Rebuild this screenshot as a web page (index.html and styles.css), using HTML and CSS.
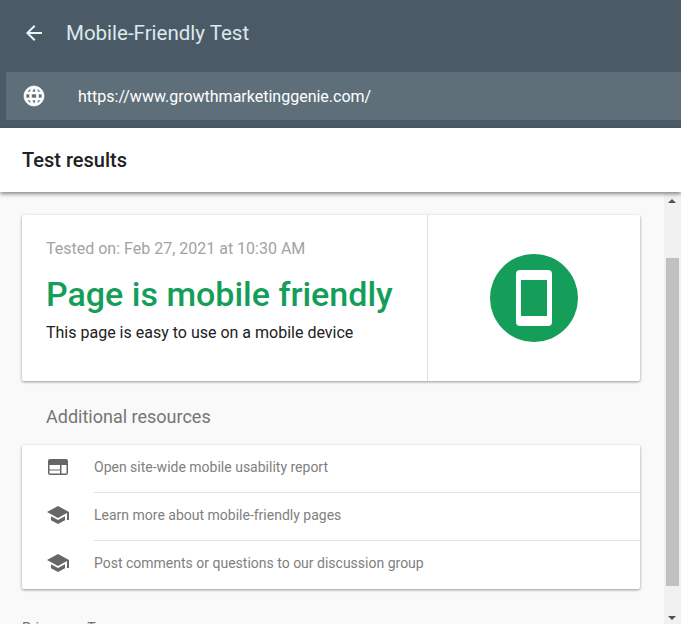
FILE: index.html
```html
<!DOCTYPE html>
<html lang="en">
<head>
<meta charset="utf-8">
<title>Mobile-Friendly Test</title>
<link rel="stylesheet" href="styles.css">
</head>
<body>
<header class="appbar">
  <div class="toolbar">
    <svg class="back" viewBox="0 0 24 24" width="24" height="24"><path d="M20 11H7.830l5.590-5.590L12 4l-8 8 8 8 1.410-1.410L7.830 13H20v-2z"/></svg>
    <h1 class="app-title">Mobile-Friendly Test</h1>
  </div>
  <div class="urlbar">
    <svg class="globe" viewBox="0 0 24 24" width="24" height="24"><path d="M12 2C6.480 2 2 6.480 2 12s4.480 10 10 10 10-4.480 10-10S17.520 2 12 2zm6.930 6h-2.950a15.650 15.650 0 0 0-1.380-3.560A8.030 8.030 0 0 1 18.920 8zM12 4.040c.830 1.200 1.480 2.530 1.910 3.960h-3.820c.430-1.430 1.080-2.760 1.910-3.960zM4.260 14C4.100 13.360 4 12.690 4 12s.100-1.360.260-2h3.380c-.080.660-.140 1.320-.140 2s.060 1.340.140 2H4.260zm.820 2h2.950c.320 1.250.780 2.450 1.380 3.560A7.987 7.987 0 0 1 5.080 16zm2.950-8H5.080a7.987 7.987 0 0 1 4.330-3.560A15.650 15.650 0 0 0 8.030 8zM12 19.960c-.830-1.200-1.480-2.530-1.910-3.960h3.820c-.430 1.430-1.080 2.760-1.910 3.960zM14.340 14H9.660c-.090-.660-.160-1.320-.160-2s.070-1.350.160-2h4.680c.090.650.160 1.320.160 2s-.070 1.340-.160 2zm.250 5.560c.600-1.110 1.060-2.310 1.380-3.560h2.950a8.030 8.030 0 0 1-4.330 3.560zM16.360 14c.080-.660.140-1.320.140-2s-.060-1.340-.140-2h3.380c.160.640.260 1.310.260 2s-.100 1.360-.260 2h-3.380z"/></svg>
    <span class="url">https://www.growthmarketinggenie.com/</span>
  </div>
</header>
<div class="subbar"><h2 class="sub-title">Test results</h2></div>
<div class="body-row">
  <main class="content">
    <section class="card result">
      <div class="result-text">
        <p class="tested">Tested on: Feb 27, 2021 at 10:30 AM</p>
        <p class="verdict">Page is mobile friendly</p>
        <p class="desc">This page is easy to use on a mobile device</p>
      </div>
      <div class="result-icon">
        <div class="badge"><div class="phone"><div class="screen"></div></div></div>
      </div>
    </section>
    <h3 class="res-heading">Additional resources</h3>
    <section class="card resources">
      <div class="res-row">
        <svg class="res-icon" viewBox="0 0 24 24" width="24" height="24"><path fill-rule="evenodd" d="M20 4H4C2.900 4 2 4.900 2 6v12c0 1.100.900 2 2 2h16c1.100 0 2-.900 2-2V6c0-1.100-.900-2-2-2zM3.500 10H14v4.500H3.500V10zm0 5.500H14v3H3.500v-3zm12-5.500h5v8.500h-5V10z"/></svg>
        <span class="res-label">Open site-wide mobile usability report</span>
      </div>
      <div class="res-row">
        <svg class="res-icon" viewBox="0 0 24 24" width="24" height="24"><path d="M5 13.180v4L12 21l7-3.820v-4L12 17l-7-3.820zM12 3L1 9l11 6 9-4.910V17h2V9L12 3z"/></svg>
        <span class="res-label">Learn more about mobile-friendly pages</span>
      </div>
      <div class="res-row">
        <svg class="res-icon" viewBox="0 0 24 24" width="24" height="24"><path d="M5 13.180v4L12 21l7-3.820v-4L12 17l-7-3.820zM12 3L1 9l11 6 9-4.910V17h2V9L12 3z"/></svg>
        <span class="res-label">Post comments or questions to our discussion group</span>
      </div>
    </section>
    <p class="footer-links"><span>Privacy</span><span>Terms</span></p>
  </main>
  <div class="scrollbar">
    <div class="arrow arrow-up"></div>
    <div class="thumb"></div>
    <div class="arrow arrow-down"></div>
  </div>
</div>
</body>
</html>
```
FILE: styles.css
```css
* { box-sizing: border-box; }
html, body { height: 100%; }
body {
  margin: 0;
  height: 624px;
  overflow: hidden;
  display: flex;
  flex-direction: column;
  font-family: Roboto, "Liberation Sans", sans-serif;
  background: #f9f9f9;
}
h1, h2, h3, p { margin: 0; font-weight: 400; }

.appbar {
  height: 128px;
  flex: none;
  background: #4a5b67;
  padding-left: 6px;
}
.toolbar {
  height: 72px;
  margin-left: -6px;
  padding: 0 0 7px 22px;
  display: flex;
  align-items: center;
}
.back { fill: #eef3f5; flex: none; }
.app-title {
  margin-left: 20px;
  font-size: 20.5px;
  line-height: 28px;
  color: #dfe8ec;
}
.urlbar {
  height: 48px;
  background: #5f6f7a;
  display: flex;
  align-items: center;
  padding-left: 16px;
}
.globe {
  fill: #fff;
  stroke: #fff;
  stroke-width: 0.6;
  flex: none;
}
.url {
  margin-left: 32px;
  font-size: 16px;
  color: #fff;
}

.subbar {
  height: 64px;
  flex: none;
  background: #fff;
  padding-left: 22px;
  display: flex;
  align-items: center;
  position: relative;
  z-index: 1;
  box-shadow: 0 2px 4px rgba(0, 0, 0, 0.45);
}
.sub-title {
  font-size: 20px;
  font-weight: 500;
  color: #212121;
}

.body-row {
  flex: 1;
  min-height: 0;
  display: flex;
}
.content {
  flex: 1;
  min-width: 0;
  overflow: hidden;
  padding: 23px 24px 0 22px;
}
.card {
  background: #fff;
  border-radius: 2px;
  box-shadow: 0 1px 3px rgba(0, 0, 0, 0.4);
}
.result {
  height: 166px;
  display: flex;
}
.result-text {
  width: 406px;
  padding: 24px 0 0 24px;
  border-right: 1px solid #e0e0e0;
}
.tested {
  font-size: 16px;
  line-height: 20px;
  color: #a3a3a3;
}
.verdict {
  margin-top: 13px;
  font-size: 34px;
  line-height: 44px;
  font-weight: 500;
  color: #159d5a;
}
.desc {
  margin-top: 5px;
  font-size: 16px;
  line-height: 24px;
  color: #212121;
}
.result-icon {
  flex: 1;
  display: flex;
  align-items: center;
  justify-content: center;
}
.badge {
  width: 88px;
  height: 88px;
  border-radius: 50%;
  background: #159d5a;
  display: flex;
  align-items: center;
  justify-content: center;
}
.phone {
  width: 36px;
  height: 56px;
  border-radius: 4px;
  background: #fff;
  padding: 10px 5px;
}
.screen {
  width: 26px;
  height: 36px;
  background: #159d5a;
}

.res-heading {
  margin: 24px 0 0 24px;
  font-size: 18px;
  line-height: 24px;
  color: #757575;
}
.resources {
  margin-top: 16px;
}
.res-row {
  height: 48px;
  display: flex;
  align-items: center;
  padding: 0 0 4px 24px;
  position: relative;
}
.res-row + .res-row::before {
  content: "";
  position: absolute;
  top: -1px;
  left: 72px;
  right: 0;
  height: 1px;
  background: #e0e0e0;
}
.res-icon { fill: #666; flex: none; }
.res-label {
  margin-left: 24px;
  font-size: 14px;
  color: #808080;
}
.footer-links {
  margin-top: 29px;
  font-size: 14px;
  line-height: 20px;
  color: #757575;
  display: flex;
  gap: 20px;
}

.scrollbar {
  width: 17px;
  flex: none;
  background: #f1f1f1;
  display: flex;
  flex-direction: column;
  align-items: center;
  position: relative;
}
.thumb {
  width: 13px;
  height: 328px;
  margin-top: 66px;
  background: #c1c1c1;
}
.arrow {
  position: absolute;
  left: 4px;
  width: 0;
  height: 0;
  border-left: 4px solid transparent;
  border-right: 4px solid transparent;
}
.arrow-up {
  top: 7px;
  border-bottom: 4px solid #505050;
}
.arrow-down {
  bottom: 4px;
  border-top: 4px solid #505050;
}
```
